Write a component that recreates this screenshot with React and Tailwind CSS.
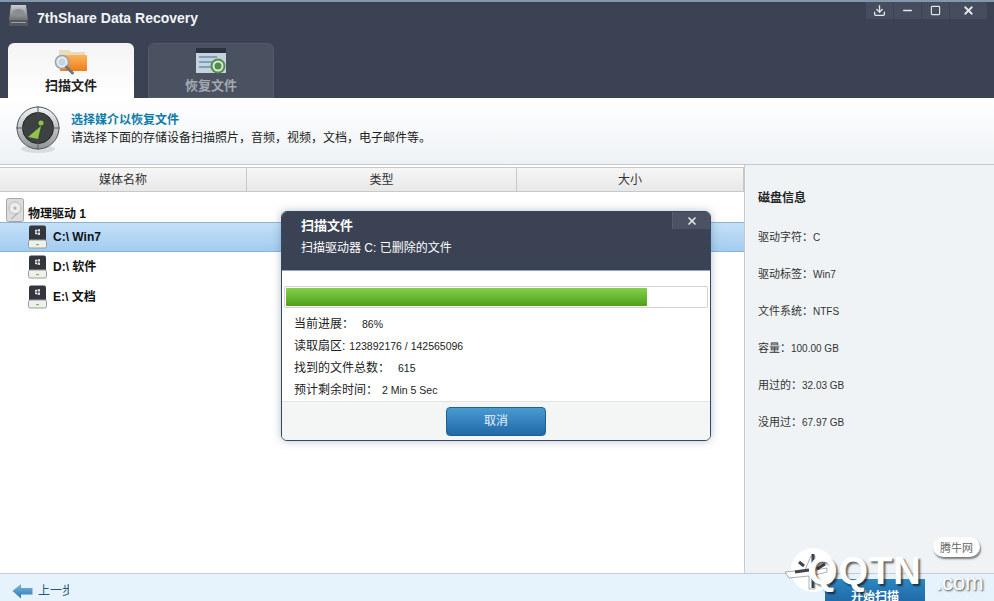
import { Download, Minus, Square, X } from 'lucide-react';

const CJK = "font-['Tahoma','Liberation_Sans','Noto_Sans_CJK_SC',sans-serif]";

const DRIVES = [
  { label: 'C:\\ Win7', active: true },
  { label: 'D:\\ 软件' },
  { label: 'E:\\ 文档' },
];

const DISK_INFO = [
  ['驱动字符：', 'C'],
  ['驱动标签：', 'Win7'],
  ['文件系统：', 'NTFS'],
  ['容量：', '100.00 GB'],
  ['用过的：', '32.03 GB'],
  ['没用过：', '67.97 GB'],
];

const COLUMNS = [
  { label: '媒体名称', width: 'w-[247px]' },
  { label: '类型', width: 'w-[270px]' },
  { label: '大小', width: 'flex-1' },
];

const PROGRESS = [
  ['当前进展：', '86%', 'gap-2'],
  ['读取扇区:', '123892176 / 142565096', 'gap-1'],
  ['找到的文件总数：', '615', 'gap-2'],
  ['预计剩余时间：', '2 Min 5 Sec', 'gap-1'],
];

function HddLogo() {
  return (
    <svg width="22" height="24" viewBox="0 0 22 24">
      <defs>
        <linearGradient id="hddTop" x1="0" y1="0" x2="0" y2="1">
          <stop offset="0" stopColor="#c9ccd0" />
          <stop offset="1" stopColor="#6d7177" />
        </linearGradient>
      </defs>
      <path d="M3 1h15l2 15H1z" fill="url(#hddTop)" />
      <ellipse cx="10.5" cy="9" rx="6" ry="4" fill="#8a8e94" />
      <rect x="1" y="16" width="19" height="6" rx="1" fill="#54585e" />
      <rect x="3" y="18" width="15" height="1" fill="#9ea2a8" />
    </svg>
  );
}

function ScanTabIcon() {
  return (
    <svg width="34" height="28" viewBox="0 0 34 28">
      <defs>
        <linearGradient id="folderFill" x1="0" y1="0" x2="0" y2="1">
          <stop offset="0" stopColor="#fbb45c" />
          <stop offset="1" stopColor="#ee7d1a" />
        </linearGradient>
      </defs>
      <path d="M5 2h10l2 2h14v6H5z" fill="#e8dcc0" />
      <path d="M6 7h26a1 1 0 0 1 1 1v14a1 1 0 0 1-1 1H6z" fill="url(#folderFill)" />
      <circle cx="8" cy="14" r="6.5" fill="#e6edf2" stroke="#9aa3ab" strokeWidth="1.6" />
      <circle cx="8" cy="14" r="3.5" fill="#c6d3dc" />
      <path d="M12.5 19l6 6" stroke="#6f767d" strokeWidth="3" strokeLinecap="round" />
    </svg>
  );
}

function RestoreTabIcon() {
  return (
    <svg width="32" height="28" viewBox="0 0 32 28">
      <rect x="1" y="1" width="30" height="25" fill="#c6d2dc" />
      <rect x="1" y="1" width="30" height="5" fill="#2c3340" />
      <rect x="4" y="9" width="18" height="2" fill="#7f9fc0" />
      <rect x="4" y="14" width="14" height="2" fill="#7f9fc0" />
      <rect x="4" y="19" width="14" height="2" fill="#7f9fc0" />
      <circle cx="23" cy="19" r="7.5" fill="#4f8e4c" />
      <circle cx="23" cy="19" r="4.5" fill="none" stroke="#dfe7dc" strokeWidth="2" />
    </svg>
  );
}

function RadarIcon() {
  return (
    <svg width="46" height="50" viewBox="0 0 46 50">
      <defs>
        <linearGradient id="radarRim" x1="0" y1="0" x2="0" y2="1">
          <stop offset="0" stopColor="#f2f4f5" />
          <stop offset="1" stopColor="#8f9498" />
        </linearGradient>
      </defs>
      <ellipse cx="23" cy="44" rx="17" ry="4" fill="#d8dcdf" />
      <circle cx="23" cy="23" r="21" fill="url(#radarRim)" stroke="#50565a" strokeWidth="1" />
      <circle cx="23" cy="23" r="15.5" fill="#3d4240" stroke="#22262a" strokeWidth="1" />
      <path d="M23 1v8M23 37v8M1 23h8M37 23h8" stroke="#5a5f63" strokeWidth="1" />
      <path d="M13 32l13-11-3 13z" fill="#8fc34a" />
      <circle cx="26" cy="18" r="2.5" fill="#8fc34a" />
    </svg>
  );
}

function PhysicalDiskIcon() {
  return (
    <svg width="18" height="24" viewBox="0 0 18 24">
      <rect x="0.5" y="0.5" width="17" height="23" rx="2" fill="#dcdcdc" stroke="#a6a6a6" />
      <circle cx="9" cy="10" r="6" fill="#ececec" stroke="#b8b8b8" />
      <circle cx="9" cy="10" r="1.5" fill="#b0b0b0" />
      <path d="M5 21l7-6" stroke="#a0a0a0" />
    </svg>
  );
}

function DriveIcon() {
  return (
    <svg width="19" height="24" viewBox="0 0 19 24">
      <rect x="1" y="0.5" width="17" height="17" rx="2" fill="#33373d" />
      <rect x="0.5" y="15" width="18" height="8" rx="1.5" fill="#eef0ee" stroke="#9a9e9a" />
      <rect x="8" y="19" width="3" height="1.2" fill="#7bbf3b" />
      <path d="M7 5l2-.4v2L7 6.8zM9.6 4.5L12 4v2.6H9.6zM7 7.3l2 .2v2l-2-.4zM9.6 7.5H12v2.6l-2.4-.4z" fill="#e6e6e6" />
    </svg>
  );
}

function BackArrow() {
  return (
    <svg width="21" height="16" viewBox="0 0 21 16">
      <defs>
        <linearGradient id="arrowFill" x1="0" y1="0" x2="0" y2="1">
          <stop offset="0" stopColor="#7fb6de" />
          <stop offset="1" stopColor="#2a79b4" />
        </linearGradient>
      </defs>
      <path d="M0.5 8L9 1v4h11.5v6.500H9v4z" fill="url(#arrowFill)" />
    </svg>
  );
}

function Watermark() {
  return (
    <div className="absolute left-[785px] top-[546px] w-[209px] h-[55px] pointer-events-none">
      <svg className="absolute left-0 top-0" width="56" height="52" viewBox="0 0 56 52">
        <circle cx="28" cy="24" r="22" fill="#ffffff" />
        <path d="M0 26l20-2 6-14h4v14l12-2v4l-12 3v14h-6V30L4 32z" fill="#ffffff" stroke="#555c62" strokeWidth="0.5" />
        <path d="M14 16l5 4M28 8v14M40 18l-8 5M10 26l14-2M28 26v16" stroke="#3e444a" strokeWidth="3" />
      </svg>
      <span className="absolute left-[23px] top-[4px] text-[38px] leading-[42px] tracking-[1px] font-bold text-white font-['Liberation_Sans',sans-serif] [text-shadow:2px_2px_2px_rgba(0,0,0,0.6)]">
        QQTN
      </span>
      <span className="absolute left-[151px] top-[25px] text-[22px] leading-[24px] text-white font-['Liberation_Sans',sans-serif] [text-shadow:1px_1px_2px_rgba(0,0,0,0.7)]">
        .com
      </span>
      <span className="absolute left-[148px] top-[-9px] w-[47px] h-[20px] rounded-full bg-white text-[#666] text-[11px] leading-[20px] text-center shadow-[1px_2px_2px_rgba(0,0,0,0.5)] font-['Noto_Sans_CJK_SC',sans-serif]">
        腾牛网
      </span>
    </div>
  );
}

function ScanDialog() {
  return (
    <div className={`absolute left-[281px] top-[211px] w-[430px] h-[230px] rounded-[6px] border border-[#2d4a68] bg-white shadow-[0_0_8px_rgba(60,70,90,0.35)] overflow-hidden flex flex-col ${CJK}`}>
      <div className="relative h-[59px] bg-[#3a4254] border-b border-[#8fa6bd] px-[19px] pt-[4px] text-white">
        <p className="text-[13px] leading-[20px] font-bold">扫描文件</p>
        <p className="text-[12px] leading-[22px] mt-[1px]">扫描驱动器 C: 已删除的文件</p>
        <button className="absolute right-0 top-0 w-[38px] h-[17px] bg-[#4a5263] flex items-center justify-center border-l border-[#555d6e]">
          <X size={12} strokeWidth={3.500} className="text-[#dfe3e8]" />
        </button>
      </div>
      <div className="flex-1 flex flex-col">
        <div className="mx-[2px] mt-[15px] h-[22px] rounded-[2px] border border-[#d2d2d2] p-[1px]">
          <div className="h-full w-[361px] rounded-[1px] bg-gradient-to-b from-[#84d04c] to-[#4fa015]" />
        </div>
        <div className="px-[12px] mt-[5px] text-[11px] leading-[22px] text-[#222]">
          {PROGRESS.map(([label, value, gap]) => (
            <div key={label} className={`flex ${gap}`}>
              <span className="text-[12px]">{label}</span>
              <span className="text-[10.500px]">{value}</span>
            </div>
          ))}
        </div>
      </div>
      <div className="h-[39px] bg-[#f4f6f6] border-t border-[#e4e6e6] flex items-center justify-center">
        <button className="w-[100px] h-[29px] rounded-[4px] border border-[#1e5f96] bg-gradient-to-b from-[#4a9bd2] to-[#1f6aa8] text-[12px] text-[#e8f2fa]">
          取消
        </button>
      </div>
    </div>
  );
}

export default function App() {
  return (
    <div className={`relative w-[994px] h-[601px] overflow-hidden bg-white flex flex-col ${CJK}`}>
      {/* Header with tabs */}
      <div className="h-[98px] bg-[#3a4254] border-t-2 border-[#8298ad] flex flex-col shrink-0">
        <div className="h-[41px] flex justify-between">
          <div className="flex items-start gap-[7px] pl-[8px] pt-[2px]">
            <HddLogo />
            <span className="text-[14px] leading-[28px] font-bold text-[#f2f4f6]">7thShare Data Recovery</span>
          </div>
          <div className="flex gap-px pr-[7px] h-[17px] text-[#e4e7ea]">
            <button className="w-[27px] flex items-center justify-center bg-[#454d5e]"><Download size={13} strokeWidth={2.500} /></button>
            <button className="w-[27px] flex items-center justify-center bg-[#454d5e]"><Minus size={13} strokeWidth={3} /></button>
            <button className="w-[27px] flex items-center justify-center bg-[#454d5e]"><Square size={11} strokeWidth={2.500} /></button>
            <button className="w-[37px] flex items-center justify-center bg-[#454d5e]"><X size={13} strokeWidth={3.500} /></button>
          </div>
        </div>
        <div className="flex gap-[14px] pl-[8px] flex-1">
          <div className="w-[126px] rounded-t-[6px] bg-gradient-to-b from-[#f4f4f4] to-white flex flex-col items-center pt-[5px]">
            <ScanTabIcon />
            <span className="text-[13px] leading-[18px] font-bold text-[#222] mt-[1px]">扫描文件</span>
          </div>
          <div className="w-[126px] rounded-t-[6px] bg-[#4a5160] border border-[#535a6a] flex flex-col items-center pt-[3px]">
            <RestoreTabIcon />
            <span className="text-[13px] leading-[18px] font-bold text-[#a3a8b0] mt-[2px]">恢复文件</span>
          </div>
        </div>
      </div>

      {/* Hint band */}
      <div className="h-[67px] shrink-0 bg-gradient-to-b from-white to-[#eef2f6] flex items-start gap-[10px] pl-[15px] pt-[7px] border-b border-[#c4c8cc]">
        <RadarIcon />
        <div className="pt-[6px]">
          <p className="text-[12px] leading-[18px] font-bold text-[#0f7ba8]">选择媒介以恢复文件</p>
          <p className="text-[12px] leading-[18px] text-[#222]">请选择下面的存储设备扫描照片，音频，视频，文档，电子邮件等。</p>
        </div>
      </div>

      <div className="flex-1 flex min-h-0">
        {/* Media list */}
        <div className="flex-1 flex flex-col pt-[2px]">
          <div className="flex h-[25px] bg-gradient-to-b from-[#f6f6f6] to-[#e8e8e8] border-y border-[#c8c8c8]">
            {COLUMNS.map((col) => (
              <div key={col.label} className={`${col.width} border-r border-[#c8c8c8] text-center text-[12px] leading-[24px] text-[#333]`}>
                {col.label}
              </div>
            ))}
          </div>
          <div className="flex items-end gap-[4px] pl-[6px] pt-[4px] h-[30px]">
            <PhysicalDiskIcon />
            <span className="text-[12px] leading-[16px] font-bold text-[#111]">物理驱动 1</span>
          </div>
          {DRIVES.map((drive) => (
            <div
              key={drive.label}
              className={`flex items-center gap-[6px] pl-[28px] h-[30px] ${drive.active ? 'bg-gradient-to-b from-[#c4e0f8] to-[#a2ccf0] border-y border-[#8eb2d4]' : ''}`}
            >
              <DriveIcon />
              <span className="text-[12px] font-bold text-[#111]">{drive.label}</span>
            </div>
          ))}
        </div>

        {/* Disk info */}
        <div className="w-[250px] shrink-0 bg-[#f0f3f6] border-l border-[#c8ccd0] pl-[13px] pt-[25px]">
          <p className="text-[12px] leading-[16px] font-bold text-[#222] mb-[13px]">磁盘信息</p>
          <div className="text-[11px] text-[#333]">
            {DISK_INFO.map(([label, value]) => (
              <div key={label} className="h-[37px] flex items-center">
                <span>{label}</span>
                <span className="text-[10px]">{value}</span>
              </div>
            ))}
          </div>
        </div>
      </div>

      {/* Footer */}
      <div className="h-[28px] shrink-0 bg-[#e6f3fc] border-t border-[#c8ccd0] flex justify-between">
        <div className="flex items-center gap-[5px] pl-[12px] pt-[7px] text-[12px] text-[#1c5a86]">
          <BackArrow />
          <span className="w-[31px] overflow-hidden whitespace-nowrap">上一步</span>
        </div>
        <button className="mr-[69px] mt-[5px] w-[100px] h-[23px] bg-gradient-to-b from-[#2f86c0] to-[#1f6aa8] text-white text-[12px] font-bold leading-[36px] overflow-hidden">
          开始扫描
        </button>
      </div>

      <ScanDialog />
      <Watermark />
    </div>
  );
}
